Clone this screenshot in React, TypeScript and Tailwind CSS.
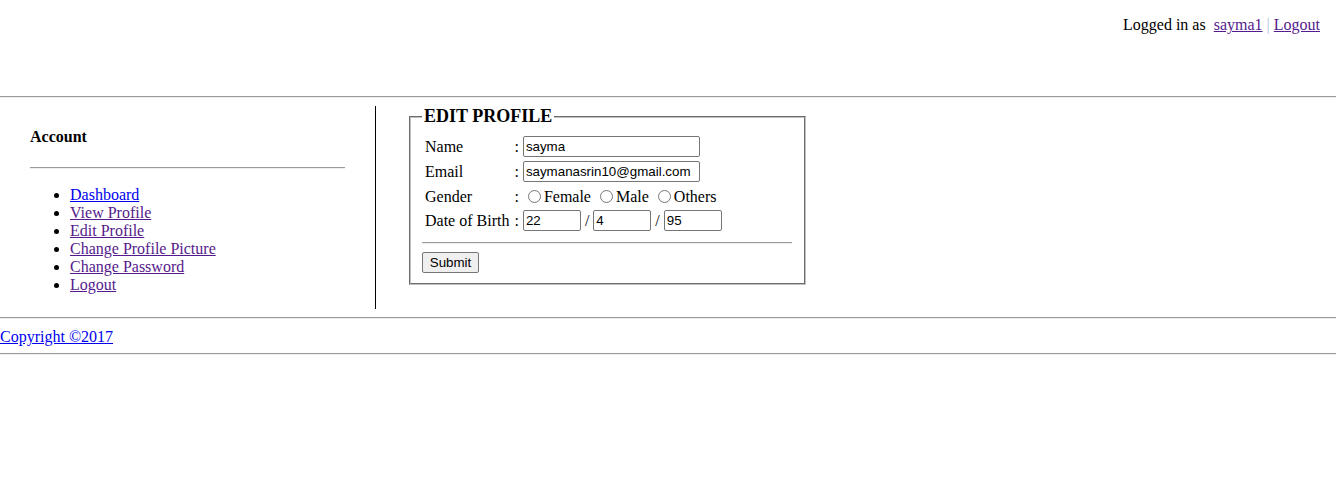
import React from "react";

const links = [
  { label: "Dashboard", visited: false },
  { label: "View Profile", visited: true },
  { label: "Edit Profile", visited: true },
  { label: "Change Profile Picture", visited: true },
  { label: "Change Password", visited: true },
  { label: "Logout", visited: true },
];

function Hr({ className = "" }: { className?: string }) {
  return <hr className={"border-t border-b border-t-[#9a9a9a] border-b-[#eeeeee] " + className} />;
}

function TextInput({ value, w }: { value: string; w: string }) {
  return (
    <input
      type="text"
      defaultValue={value}
      className={
        "h-[21px] border border-[#767676] rounded-[2px] px-[2px] align-middle text-[13.33px] text-black font-['Liberation_Sans',Arial,sans-serif] bg-white " +
        w
      }
    />
  );
}

function Radio({ label }: { label: string }) {
  return (
    <>
      <input type="radio" name="gender" className="w-[13px] h-[13px] mt-[3px] mr-[3px] ml-[5px] align-[-1px]" />
      {label}
    </>
  );
}

export default function App() {
  return (
    <div className="font-['Liberation_Serif','Times_New_Roman',serif] text-[16px] leading-[18px] text-black bg-white min-h-[497px]">
      <div className="h-[88px] pt-4 pr-4 text-right">
        Logged in as&nbsp;&nbsp;
        <a href="#" className="underline text-[#551a8b]">
          sayma1
        </a>{" "}
        <span className="text-[#a9c4e6]">|</span>{" "}
        <a href="#" className="underline text-[#551a8b]">
          Logout
        </a>
      </div>
      <Hr className="my-2" />
      <div className="flex">
        <div className="w-[376px] px-[30px] border-r border-black">
          <h4 className="font-bold mt-[22px] mb-[21px]">Account</h4>
          <Hr className="my-2" />
          <ul className="list-disc pl-10 mt-[17px] mb-[15px]">
            {links.map((l) => (
              <li key={l.label}>
                <a href="#" className={"underline " + (l.visited ? "text-[#551a8b]" : "text-[#0000ee]")}>
                  {l.label}
                </a>
              </li>
            ))}
          </ul>
        </div>
        <div className="pl-[31px]">
          <fieldset className="w-[397px] mx-[2px] border-2 [border-style:groove] border-[#c0c0c0] pl-[11px] pr-3 pt-[5px] pb-[10px]">
            <legend className="px-[2px] text-[18px] leading-[21px] font-bold">EDIT PROFILE</legend>
            <div className="grid grid-cols-[auto_auto] justify-start gap-x-[5px] pl-[3px] pt-[3px]">
              <div className="h-[23px] mb-[2px] flex items-center">Name</div>
              <div className="h-[23px] mb-[2px] flex items-center whitespace-pre">
                {": "}
                <TextInput value="sayma" w="w-[177px]" />
              </div>
              <div className="h-[23px] mb-[2px] flex items-center">Email</div>
              <div className="h-[23px] mb-[2px] flex items-center whitespace-pre">
                {": "}
                <TextInput value="saymanasrin10@gmail.com" w="w-[177px]" />
              </div>
              <div className="h-[23px] mb-[1px] flex items-center">Gender</div>
              <div className="h-[23px] mb-[1px] flex items-center whitespace-pre">
                <span>
                  {": "}
                  <Radio label="Female" /> <Radio label="Male" /> <Radio label="Others" />
                </span>
              </div>
              <div className="h-[23px] flex items-center">Date of Birth</div>
              <div className="h-[23px] flex items-center whitespace-pre">
                {": "}
                <TextInput value="22" w="w-[58px]" />
                {" / "}
                <TextInput value="4" w="w-[58px]" />
                {" / "}
                <TextInput value="95" w="w-[58px]" />
              </div>
            </div>
            <Hr className="mt-[10px] mb-2" />
            <button
              type="button"
              className="w-[57px] h-[21px] border border-[#767676] rounded-[2px] bg-[#efefef] text-[13.33px] font-['Liberation_Sans',Arial,sans-serif] leading-[15px]"
            >
              Submit
            </button>
          </fieldset>
        </div>
      </div>
      <Hr className="mt-2" />
      <div className="mt-[9px] mb-[7px]">
        <a href="#" className="underline text-[#0000ee]">
          Copyright ©2017
        </a>
      </div>
      <Hr />
    </div>
  );
}
